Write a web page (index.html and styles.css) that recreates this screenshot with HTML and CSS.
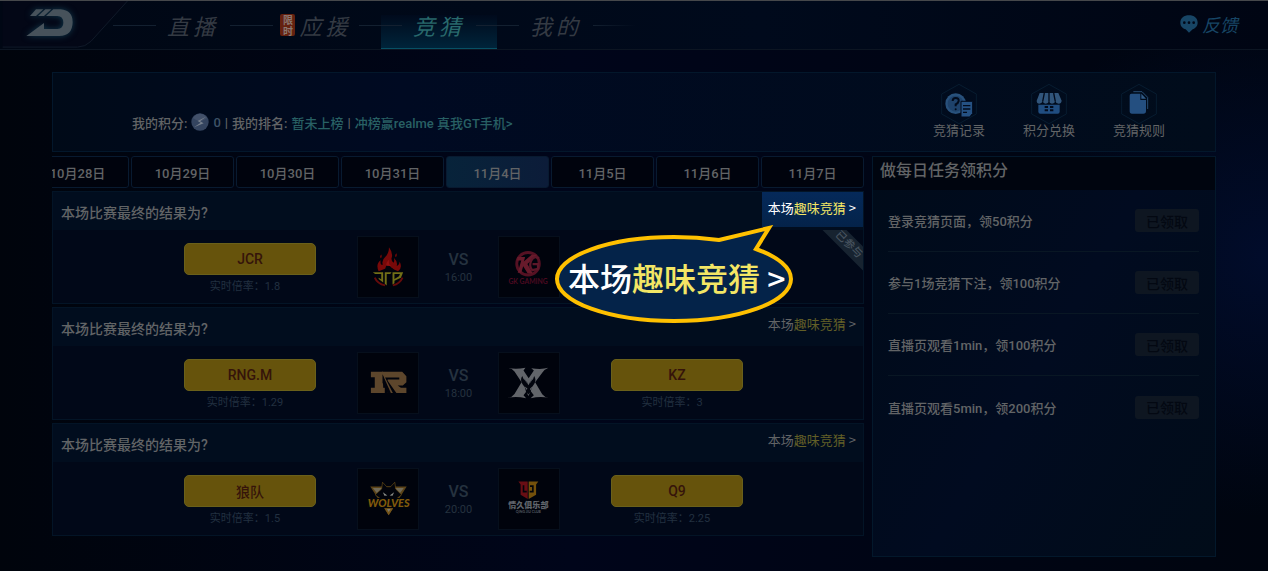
FILE: index.html
```html
<!DOCTYPE html>
<html lang="zh-CN">
<head>
    <meta charset="UTF-8">
    <meta name="viewport" content="width=device-width, initial-scale=1.0">
    <title>竞猜</title>
    <link rel="stylesheet" href="styles.css">
</head>
<body>
    <header class="topbar">
        <svg class="topbar-edge" viewBox="0 0 132 50" aria-hidden="true">
            <path d="M0 0H130L92 42Q86 48 78 48H0Z" fill="#030716"/>
            <path d="M130 0L92 42Q86 48 78 48H0" fill="none" stroke="#111a2a"/>
        </svg>
        <svg class="logo" viewBox="78 24 144 90" aria-label="logo">
            <g fill="#47525b">
                <path d="M108 28H130L108 48H90Z"/>
                <path d="M136 28H154L132 48H114Z"/>
                <path d="M160 28H182Q218 31 218 67Q217 108 178 108H79L132 69V87H172Q190 86 190 68Q190 49 172 48H138Z"/>
            </g>
        </svg>
        <nav class="nav">
            <i class="dash"></i>
            <a href="#live">直播</a>
            <i class="dash"></i>
            <a href="#support" class="has-badge"><span class="badge"><span>限</span><span>时</span></span>应援</a>
            <i class="dash"></i>
            <a href="#guess" class="active">竞猜</a>
            <i class="dash"></i>
            <a href="#mine">我的</a>
            <i class="dash last"></i>
        </nav>
        <a href="#feedback" class="feedback">
            <svg width="18" height="18" viewBox="0 0 54 54" aria-hidden="true">
                <path d="M27 1C42 1 53 9 53 23C53 34 45 40 38 43L27 53L17 43C8 40 1 34 1 23C1 9 12 1 27 1Z" fill="#174565"/>
                <g fill="#010818"><circle cx="13" cy="23" r="4"/><circle cx="27" cy="23" r="4"/><circle cx="41" cy="23" r="4"/></g>
            </svg>
            反馈
        </a>
    </header>

    <main class="page">
        <section class="summary">
            <p class="score">
                <span>我的积分:</span>
                <svg class="coin" viewBox="0 0 54 54" aria-hidden="true">
                    <circle cx="27" cy="27" r="26" fill="#34445f"/>
                    <path d="M5 15Q27 -10 49 15L27 27Z" fill="#43516a"/>
                    <path d="M45 11L20 24L29 29L9 43L38 31L27 25Z" fill="#77808d"/>
                </svg>
                <span class="points">0</span>
                <span class="bar">|</span>
                <span>我的排名:</span>
                <span class="teal">暂未上榜</span>
                <span class="bar">|</span>
                <a href="#rank" class="teal">冲榜赢realme 真我GT手机&gt;</a>
            </p>
            <div class="shortcuts">
                <a href="#record">
                    <svg viewBox="0 0 114 126" aria-hidden="true">
                        <path class="hex" d="M57 4L109 33V93L57 122L5 93V33Z"/>
                        <circle cx="47" cy="62" r="31" fill="#28517c"/>
                        <circle cx="47" cy="62" r="24" fill="#1e426b"/>
                        <path d="M38 54Q38 45 47 45Q57 45 56 54Q55 60 47 64V70" fill="none" stroke="#020b1c" stroke-width="6"/>
                        <circle cx="47" cy="79" r="3" fill="#020b1c"/>
                        <path d="M63 55H98V91L89 102H63Z" fill="#255183" stroke="#020b1c" stroke-width="3"/>
                        <path d="M69 68H91M69 78H91M69 88H81" stroke="#020b1c" stroke-width="4"/>
                    </svg>
                    竞猜记录
                </a>
                <a href="#exchange">
                    <svg viewBox="0 0 114 126" aria-hidden="true">
                        <path class="hex" d="M57 4L109 33V93L57 122L5 93V33Z"/>
                        <path d="M29 30H85L95 53Q94 62 86 62Q78 62 76 55Q74 62 66 62Q59 62 57 55Q55 62 47 62Q40 62 38 55Q35 62 28 62Q20 62 20 53Z" fill="#31557b"/>
                        <path d="M43 30L38 56M57 30V56M71 30L76 56" stroke="#020b1c" stroke-width="4"/>
                        <path d="M25 65H89V86Q89 92 83 92H31Q25 92 25 86Z" fill="#204d80"/>
                        <path d="M44 69H54V75H44ZM60 69H70V75H60ZM44 79H54V85H44ZM60 79H70V85H60Z" fill="#020b1c"/>
                    </svg>
                    积分兑换
                </a>
                <a href="#rules">
                    <svg viewBox="0 0 114 126" aria-hidden="true">
                        <path class="hex" d="M57 4L109 33V93L57 122L5 93V33Z"/>
                        <path d="M40 26H66L83 43V78" fill="none" stroke="#274b70" stroke-width="3"/>
                        <path d="M34 32H61V51H78V84Q78 92 70 92H36Q29 92 29 84V38Q29 32 34 32Z" fill="#244f80"/>
                        <path d="M64 32L78 47H64Z" fill="#315b86"/>
                    </svg>
                    竞猜规则
                </a>
            </div>
        </section>

        <div class="columns">
            <section class="left">
                <div class="dates">
                    <button type="button">10月28日</button>
                    <button type="button">10月29日</button>
                    <button type="button">10月30日</button>
                    <button type="button">10月31日</button>
                    <button type="button" class="active">11月4日</button>
                    <button type="button">11月5日</button>
                    <button type="button">11月6日</button>
                    <button type="button">11月7日</button>
                </div>

                <article class="match">
                    <div class="match-head">
                        <h2>本场比赛最终的结果为?</h2>
                        <a href="#fun1" class="fun lit">本场<em>趣味竞猜</em> &gt;</a>
                    </div>
                    <div class="match-body">
                        <div class="pick">
                            <button type="button">JCR</button>
                            <p>实时倍率：1.8</p>
                        </div>
                        <div class="team">
                            <svg viewBox="0 0 186 186" aria-hidden="true">
                                <path d="M64 106Q54 84 70 72Q68 88 77 86Q72 72 85 61Q96 51 96 32Q110 50 104 66Q103 74 110 80Q114 74 111 64Q124 76 120 90Q129 86 129 76Q139 96 124 106L96 94Z" fill="#780909"/>
                                <path d="M84 104Q84 90 96 80Q97 92 108 98L114 106Z" fill="#02040b"/>
                                <path d="M88 89Q86 79 97 70Q93 82 102 90Z" fill="#931111"/>
                                <path d="M72 54Q76 60 71 66Q65 61 72 54ZM119 50Q123 58 117 63Q112 57 119 50Z" fill="#690808"/>
                                <path d="M52 126Q60 145 84 150M138 126Q130 145 108 150" fill="none" stroke="#650b0b" stroke-width="6"/>
                                <path d="M46 109H78V141L64 130V126L72 131V115H53Z" fill="#716f17"/>
                                <path d="M83 109H104L100 115H89V150L83 145Z" fill="#716f17"/>
                                <path d="M107 109H140L133 126L113 136V130L127 122L130 115H113V143L107 147Z" fill="#716f17"/>
                            </svg>
                        </div>
                        <div class="versus"><b>VS</b><time>16:00</time></div>
                        <div class="team">
                            <svg viewBox="0 0 186 186" aria-hidden="true">
                                <circle cx="90" cy="83" r="35" fill="none" stroke="#551123" stroke-width="9"/>
                                <path d="M57 62H81L77 76L101 55H119L88 84L105 113H89L75 91L69 111H58L69 73H56Z" fill="#671a2b"/>
                                <path d="M124 66Q108 56 99 75Q93 93 103 103L121 99V84H104" fill="none" stroke="#5d1729" stroke-width="7"/>
                                <text x="90" y="146" text-anchor="middle" font-size="21" font-weight="700" fill="#4b0a20">GK GAMING</text>
                            </svg>
                        </div>
                        <div class="pick right"></div>
                    </div>
                    <div class="ribbon"><span>已参与</span></div>
                    <div class="callout">
                        <svg viewBox="0 0 240 98" aria-hidden="true">
                            <path d="M165 15L215 3L202 24A117 42 0 0 1 237 54A117 42 0 0 1 120 96A117 42 0 0 1 3 54A117 42 0 0 1 120 12Q143 12 165 15Z" fill="#042349" stroke="#ffc000" stroke-width="4"/>
                        </svg>
                        <span>本场<em>趣味竞猜</em> &gt;</span>
                    </div>
                </article>

                <article class="match">
                    <div class="match-head">
                        <h2>本场比赛最终的结果为?</h2>
                        <a href="#fun2" class="fun">本场<em>趣味竞猜</em> &gt;</a>
                    </div>
                    <div class="match-body">
                        <div class="pick">
                            <button type="button">RNG.M</button>
                            <p>实时倍率：1.29</p>
                        </div>
                        <div class="team">
                            <svg viewBox="0 0 186 186" aria-hidden="true">
                                <path d="M40 58H78V108H83V124H40V108H52V75H40Z" fill="#5d462c"/>
                                <path d="M74 58H137L150 72V91L139 101H123L133 108H150V124H119L92 86V82H128V76H84L108 124H93Z" fill="#5d462c"/>
                                <path d="M76 66L102 124H92L76 92Z" fill="#02040d"/>
                            </svg>
                        </div>
                        <div class="versus"><b>VS</b><time>18:00</time></div>
                        <div class="team">
                            <svg viewBox="0 0 186 186" aria-hidden="true">
                                <path d="M28 46Q50 52 82 46L76 54L92 78L108 54L100 47Q131 52 153 46Q141 51 134 61L112 91L134 128Q141 137 153 139Q129 134 98 140L108 131L92 110L76 131L84 140Q53 134 28 139Q41 137 48 127L70 91L48 57Q41 49 28 46Z" fill="#62656a"/>
                                <path d="M72 71Q74 82 86 90L91 100L97 90Q108 82 109 71Q117 84 109 96L101 108L97 126L91 135L85 126L81 108L73 97Q64 84 72 71Z" fill="#02050e"/>
                                <path d="M79 103L88 110L86 115ZM104 103L96 111L98 116ZM86 122L91 129L97 122L91 133Z" fill="#62656a"/>
                                <path d="M78 80L88 93M104 80L95 93" stroke="#454a51" stroke-width="3"/>
                            </svg>
                        </div>
                        <div class="pick right">
                            <button type="button">KZ</button>
                            <p>实时倍率：3</p>
                        </div>
                    </div>
                </article>

                <article class="match">
                    <div class="match-head">
                        <h2>本场比赛最终的结果为?</h2>
                        <a href="#fun3" class="fun">本场<em>趣味竞猜</em> &gt;</a>
                    </div>
                    <div class="match-body">
                        <div class="pick">
                            <button type="button">狼队</button>
                            <p>实时倍率：1.5</p>
                        </div>
                        <div class="team">
                            <svg viewBox="0 0 186 186" aria-hidden="true">
                                <path d="M38 54H151L95 143Z" fill="#5c4418"/>
                                <path d="M46 59H142L118 91H71Z" fill="#716a58"/>
                                <path d="M76 41L89 55H101L114 41L117 62L135 80L114 97H76L53 80L73 62Z" fill="#02040b" stroke="#6a4e15" stroke-width="2"/>
                                <path d="M77 72L91 82L82 83ZM112 72L98 82L107 83Z" fill="#8b8d88"/>
                                <path d="M36 90H150L164 122H25Z" fill="#02040b"/>
                                <path d="M82 122H109L95 143Z" fill="#75551a"/>
                                <path d="M90 124H101L95 133Z" fill="#7d7b70"/>
                                <text class="wolves" x="95" y="119" text-anchor="middle" font-size="34" fill="#805a0a">WOLVES</text>
                            </svg>
                        </div>
                        <div class="versus"><b>VS</b><time>20:00</time></div>
                        <div class="team">
                            <svg viewBox="0 0 186 186" aria-hidden="true">
                                <path d="M60 39H89V93L67 80V48Z" fill="#680e14"/>
                                <path d="M92 39H122L115 48V80L92 93Z" fill="#73500b"/>
                                <path d="M76 50V70H86M105 50V70H95M96 53H105" fill="none" stroke="#02040b" stroke-width="5"/>
                                <text class="cn" x="91" y="122" text-anchor="middle" font-size="25" fill="#60656b">情久俱乐部</text>
                                <text x="91" y="136" text-anchor="middle" font-size="11" font-weight="700" fill="#535960">QING JIU CLUB</text>
                            </svg>
                        </div>
                        <div class="pick right">
                            <button type="button">Q9</button>
                            <p>实时倍率：2.25</p>
                        </div>
                    </div>
                </article>
            </section>

            <aside class="tasks">
                <h2>做每日任务领积分</h2>
                <ul>
                    <li><span>登录竞猜页面，领50积分</span><button type="button" disabled>已领取</button></li>
                    <li><span>参与1场竞猜下注，领100积分</span><button type="button" disabled>已领取</button></li>
                    <li><span>直播页观看1min，领100积分</span><button type="button" disabled>已领取</button></li>
                    <li><span>直播页观看5min，领200积分</span><button type="button" disabled>已领取</button></li>
                </ul>
            </aside>
        </div>
    </main>
</body>
</html>
```

FILE: styles.css
```css
* {
    margin: 0;
    padding: 0;
    box-sizing: border-box;
}

body {
    min-height: 100vh;
    color: #626466;
    font-family: Roboto, 'Noto Sans CJK SC', sans-serif;
    font-size: 13px;
    font-weight: 500;
    background:
        radial-gradient(circle at 100% 45%, #010c2b 0, transparent 260px),
        linear-gradient(90deg, #00040c 0%, #00051a 45%, #00050f 100%);
}

a {
    color: inherit;
    text-decoration: none;
}

button {
    font-family: inherit;
    font-weight: 500;
    cursor: pointer;
}

em {
    font-style: normal;
}

/* top bar */
.topbar {
    position: relative;
    display: flex;
    align-items: center;
    height: 50px;
    padding: 0 30px 0 26px;
    border-top: 1px solid #46484b;
    border-bottom: 1px solid #0c1522;
    background: linear-gradient(90deg, #000714, #000a1c 60%, #000513);
}

.topbar-edge {
    position: absolute;
    left: 0;
    top: 0;
    width: 132px;
    height: 48px;
}

.logo {
    position: relative;
    width: 48px;
    height: 30px;
    margin-bottom: 4px;
    filter: drop-shadow(0 0 3px #10394d);
}

.nav {
    position: relative;
    display: flex;
    align-items: center;
    align-self: stretch;
    margin-left: 39px;
    color: #343a43;
    font-family: 'Noto Sans CJK SC', sans-serif;
    font-size: 22px;
    font-style: italic;
    font-weight: 400;
}

.nav a {
    display: flex;
    align-items: center;
    justify-content: center;
    align-self: stretch;
    width: 74px;
    letter-spacing: 4px;
}

.nav .has-badge {
    width: 86px;
}

.nav .active {
    width: 116px;
    margin: 14px -21px 0;
    padding-bottom: 14px;
    color: #28696c;
    border-bottom: 1px solid #075064;
    background: linear-gradient(#000a1c, #00243a);
}

.dash {
    position: relative;
    width: 43px;
    height: 1px;
    background: #132030;
}

.dash.last {
    background: linear-gradient(90deg, #132030, transparent);
}

.badge {
    display: flex;
    flex-direction: column;
    align-items: center;
    width: 15px;
    margin-right: 4px;
    border-radius: 2px;
    color: #8b7770;
    background: #65210f;
    font-size: 10px;
    font-style: normal;
    font-weight: 700;
    line-height: 11px;
    letter-spacing: 0;
}

.feedback {
    display: flex;
    align-items: center;
    gap: 4px;
    margin-left: auto;
    padding-bottom: 2px;
    color: #174565;
    font-size: 18px;
    font-style: italic;
    font-weight: 400;
}

/* summary panel */
.page {
    padding: 22px 52px 14px;
}

.summary {
    display: flex;
    justify-content: space-between;
    height: 80px;
    padding: 0 31px 0 79px;
    border: 1px solid #03172b;
    background: linear-gradient(90deg, #000a18, #000a22 30%, #010c1b);
}

.score {
    display: flex;
    align-items: center;
    gap: 4px;
    padding-top: 20px;
    white-space: nowrap;
}

.coin {
    width: 18px;
    height: 18px;
}

.points {
    color: #3d5266;
}

.teal {
    color: #286064;
}

.shortcuts {
    display: flex;
    padding-top: 10px;
}

.shortcuts a {
    display: flex;
    flex-direction: column;
    align-items: center;
    width: 90px;
    font-weight: 400;
    line-height: 16px;
}

.shortcuts svg {
    width: 38px;
    height: 42px;
    margin-bottom: -2px;
}

.hex {
    fill: none;
    stroke: #071c30;
    stroke-width: 3;
}

/* columns */
.columns {
    display: grid;
    grid-template-columns: minmax(0, 1fr) 344px;
    gap: 8px;
    margin-top: 4px;
}

.left {
    display: flex;
    flex-direction: column;
    gap: 3px;
}

.dates {
    display: flex;
    justify-content: flex-end;
    gap: 2px;
    overflow: hidden;
}

.dates button {
    flex: 0 0 103px;
    height: 32px;
    border: 1px solid #081a30;
    border-radius: 3px;
    color: #626466;
    background: #00030d;
    font-size: 13px;
}

.dates .active {
    background: linear-gradient(90deg, #07233a, #0c1c39);
}

/* match card */
.match {
    position: relative;
    border: 1px solid #031426;
    background: #010818;
}

.match-head {
    display: flex;
    align-items: center;
    justify-content: space-between;
    height: 38px;
    padding-left: 8px;
    background: #010d1e;
}

.match-head h2 {
    padding-top: 2px;
    font-size: 14px;
    font-weight: 500;
}

.fun {
    align-self: flex-start;
    height: 35px;
    padding: 0 7px 0 6px;
    font-family: 'Noto Sans CJK SC', sans-serif;
    font-weight: 400;
    line-height: 32px;
}

.fun em {
    color: #625f27;
}

.fun.lit {
    color: #fff;
    background: linear-gradient(#05295a, #042349);
}

.fun.lit em,
.callout em {
    color: #f3e665;
}

.match-body {
    display: flex;
    justify-content: center;
    height: 73px;
    padding: 6px 0 0 11px;
}

.pick {
    width: 132px;
    margin-right: 41px;
    padding-top: 7px;
}

.pick.right {
    margin: 0 0 0 51px;
}

.pick button {
    width: 100%;
    height: 32px;
    border: 1px solid #6a601a;
    border-radius: 5px;
    color: #35130a;
    background: #66530c;
    font-size: 14px;
}

.pick p {
    padding-right: 10px;
    color: #223040;
    font-size: 11px;
    font-weight: 400;
    line-height: 24px;
    text-align: center;
}

.team {
    width: 62px;
    height: 62px;
    border: 1px solid #060f1c;
    background: #00030c;
}

.team svg {
    display: block;
    font-family: Lato, sans-serif;
}

.team .wolves {
    font-style: italic;
    font-weight: 900;
}

.team .cn {
    font-family: 'Noto Sans CJK SC', sans-serif;
    font-weight: 900;
}

.versus {
    display: flex;
    flex-direction: column;
    align-items: center;
    width: 79px;
    padding-top: 14px;
    color: #25323f;
    font-size: 16px;
    line-height: 20px;
}

.versus b {
    font-weight: 500;
}

.versus time {
    font-size: 11px;
    font-weight: 400;
    line-height: 16px;
}

.ribbon {
    position: absolute;
    right: 0;
    top: 38px;
    width: 42px;
    height: 42px;
    overflow: hidden;
}

.ribbon span {
    position: absolute;
    right: -26px;
    top: 6px;
    width: 80px;
    color: #47535f;
    background: #172330;
    font-size: 11px;
    line-height: 17px;
    text-align: center;
    transform: rotate(45deg);
}

.callout {
    position: absolute;
    right: 69px;
    top: 33px;
    z-index: 2;
    width: 240px;
    height: 98px;
    color: #fff;
    font-family: 'Noto Sans CJK SC', sans-serif;
    font-size: 32px;
    font-weight: 500;
    line-height: 48px;
    white-space: nowrap;
}

.callout svg {
    position: absolute;
    left: 0;
    top: 0;
}

.callout span {
    position: absolute;
    left: 14px;
    top: 28px;
}

/* daily tasks */
.tasks {
    min-height: 401px;
    border: 1px solid #03182b;
    background: linear-gradient(120deg, #000b19, #010b20 50%, #010c19);
}

.tasks h2 {
    height: 33px;
    padding-left: 7px;
    background: #00050f;
    font-size: 16px;
    font-weight: 500;
    line-height: 28px;
}

.tasks ul {
    padding: 0 16px 0 15px;
    list-style: none;
}

.tasks li {
    display: flex;
    align-items: center;
    justify-content: space-between;
    height: 62px;
    border-bottom: 1px solid #091724;
}

.tasks li:last-child {
    border-bottom: 0;
}

.tasks button {
    width: 64px;
    height: 23px;
    border: 0;
    border-radius: 3px;
    color: #030812;
    background: #0e1621;
    font-size: 14px;
}
```
